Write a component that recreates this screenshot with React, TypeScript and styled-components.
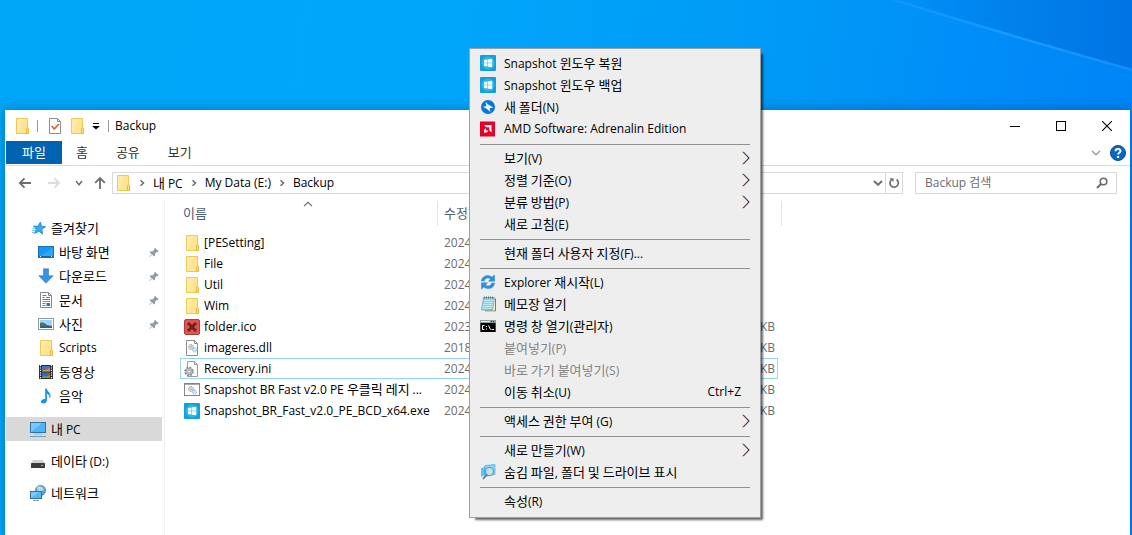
import React from "react";
import styled, { createGlobalStyle, css } from "styled-components";

const GlobalStyle = createGlobalStyle`
  *, *::before, *::after { box-sizing: border-box; }
  body { margin: 0; }
  body, button, input, table {
    font-family: "Open Sans", "Noto Sans CJK KR", sans-serif;
    font-size: 12px;
    line-height: 16px;
    color: #000;
  }
  button { border: 0; padding: 0; background: none; text-align: left; }
`;

/* ---------- text ---------- */

const Hangul = styled.span`
  font-family: "Noto Sans CJK KR", sans-serif;
  font-size: 13px;
`;

/* Hangul is set one size up so that it balances the Latin letters. */
function Label({ children }: { children: string }) {
  const runs = children.split(/([가-힣]+(?: [가-힣]+)* ?)/).filter(Boolean);
  return (
    <span>
      {runs.map((run, i) =>
        /[가-힣]/.test(run) ? <Hangul key={i}>{run}</Hangul> : <React.Fragment key={i}>{run}</React.Fragment>
      )}
    </span>
  );
}

/* ---------- icons ---------- */

const Icon = styled.svg`
  display: block;
  flex: none;
`;

const Svg = ({ w = 16, h = 16, children }: { w?: number; h?: number; children: React.ReactNode }) => (
  <Icon width={w} height={h} viewBox={`0 0 ${w} ${h}`} fill="none" aria-hidden="true">
    {children}
  </Icon>
);

const FolderIcon = () => (
  <Svg>
    <path d="M2.500.5h11v15h-11z" fill="#ffe592" stroke="#ecca58" />
    <path d="M3 1h6L4 15H3z" fill="#ffeba8" />
    <path d="M12.500 10.500c0-1 2-1 2 0v5h-2z" fill="#ffe17e" stroke="#e5b93c" />
  </Svg>
);

const WindowsAppIcon = () => (
  <Svg>
    <rect width="16" height="16" rx="1" fill="#12a0dc" />
    <circle cx="8" cy="8" r="6.500" fill="#2cb7ec" />
    <path d="M4 5l3.500-.6v3.300H4zM8.100 4.300L12.200 3.700v4H8.100zM4 8.300h3.500v3.300L4 11zM8.100 8.300h4.100v4l-4.100-.6z" fill="#fff" />
  </Svg>
);

const BoltIcon = () => (
  <Svg>
    <circle cx="8" cy="8" r="7" fill="#0a78d8" />
    <path d="M5.500 3l3.300 3 4.400 2.600-3.700.6.900 3.900-3.400-3L3 7.800l3.300-.6z" fill="#fff" />
  </Svg>
);

const AmdIcon = () => (
  <Svg>
    <rect width="15" height="15" y="0.500" fill="#e4002b" />
    <path d="M4 4h7.500v7.500L9.300 9.300V6.200H6.200zM6 7L4 9v2.500h2.600l2-2H6z" fill="#fff" />
  </Svg>
);

const RefreshIcon = () => (
  <Svg>
    <path d="M1 7.300C1.500 1.800 8-.8 12 2.800L14.800.5v7H8L10.200 5C7.800 3.600 5 4.600 4.400 7.300z" fill="#2f8fd8" />
    <path d="M15 8.700c-.5 5.500-7 8.100-11 4.500l-2.800 2.300v-7H8L5.800 11c2.400 1.400 5.200.4 5.800-2.300z" fill="#2f8fd8" />
  </Svg>
);

const NotepadIcon = () => (
  <Svg>
    <path d="M5 2.500h11v12.800H5z" fill="#8d7a48" />
    <path d="M4.500 2h10.500v12.500H5z" fill="#f3ecd0" />
    <path d="M3.500 1.500h11l-2 12.500h-11z" fill="#8fd2e0" stroke="#4b9cae" strokeWidth=".6" />
    <path d="M3.700 4.500h10M3.400 6.500h10M3 8.500h10M2.700 10.500h10M2.400 12.300h9.800" stroke="#c6edf4" strokeWidth=".8" />
    <path d="M4.500.5v2M6.500.5v2M8.500.5v2M10.500.5v2M12.500.5v2" stroke="#33616e" strokeWidth=".8" />
  </Svg>
);

const ConsoleIcon = () => (
  <Svg>
    <rect y="2" width="16" height="12" fill="#8f9a9f" />
    <path d="M1 3.500h9" stroke="#e6eef0" />
    <path d="M11 3.500h1M13 3.500h1" stroke="#333" />
    <rect x=".5" y="5" width="15" height="9" fill="#000" />
    <path d="M4.500 7.500H2.500v4h2M6.500 8v1M6.500 10.500v1M8.500 7.500l2 4M11.500 11.500H14" stroke="#fff" />
  </Svg>
);

const SearchFoldersIcon = () => (
  <Svg>
    <path d="M4 2.500l9-2v9l-9 2z" fill="#49b6f0" />
    <path d="M1 4l3-.5v8L1 13z" fill="#5bc3f8" />
    <path d="M5 1.500l10-1v10l-10 2z" fill="#86d3f8" stroke="#3fa9e0" strokeWidth=".6" />
    <circle cx="9.500" cy="7.500" r="4" fill="#b7e5fa" stroke="#82929c" strokeWidth="1.200" />
    <path d="M6.800 10.700L3 15" stroke="#6c7880" strokeWidth="1.800" />
  </Svg>
);

const RedXIcon = () => (
  <Svg>
    <rect x=".5" y=".5" width="15" height="15" rx="1.500" fill="#e4524f" stroke="#a8423f" />
    <path d="M4 4l8 8M12 4l-8 8" stroke="#6b2422" strokeWidth="3" />
  </Svg>
);

const GearPair = () => (
  <g stroke="#8b959b">
    <circle cx="7" cy="7" r="2.500" fill="#dfe4e7" strokeDasharray="1.200 .7" />
    <circle cx="7" cy="7" r="1" fill="#fff" strokeWidth=".6" />
    <circle cx="10.500" cy="10" r="2" fill="#d4e8f4" stroke="#7fa9c2" strokeDasharray="1 .6" />
  </g>
);

const DllIcon = () => (
  <Svg>
    <path d="M2.500.5h8l3 3v12h-11z" fill="#fff" stroke="#8d8d8d" />
    <path d="M10.500.5v3h3" stroke="#8d8d8d" />
    <GearPair />
  </Svg>
);

const IniIcon = () => (
  <Svg>
    <path d="M3.500.5h7l3 3v12h-10z" fill="#fafafa" stroke="#9b9b9b" />
    <path d="M10.500.5v3h3" stroke="#9b9b9b" />
    <circle cx="5" cy="10.500" r="4" fill="#c9cdd0" stroke="#878c90" strokeWidth="1.600" strokeDasharray="1.800 1.340" />
    <circle cx="5" cy="10.500" r="3" fill="#c4c9cc" stroke="#8c9195" strokeWidth=".6" />
    <circle cx="5" cy="10.500" r="1.300" fill="#fff" stroke="#8c9195" strokeWidth=".6" />
  </Svg>
);

const BatchIcon = () => (
  <Svg>
    <rect x=".5" y="1.500" width="15" height="12" fill="#fff" stroke="#858585" />
    <path d="M1 2.500h14" stroke="#a9a9a9" />
    <GearPair />
  </Svg>
);

const StarIcon = () => (
  <Svg>
    <path d="M10.500 2l.8 4.200 4.300.6-3.700 2.400.6 4.800-3.600-2.700-4.400 2.100 1.800-4.400L3.500 6l4.300.2z" fill="#35aaf0" stroke="#1a82c8" strokeWidth=".8" />
    <path d="M2.500 8.500h3M2 10.500h3M2 12.500h2" stroke="#5cbcf2" strokeWidth=".8" />
  </Svg>
);

const DesktopIcon = () => (
  <Svg>
    <rect x=".5" y="2.500" width="15" height="11" fill="#1a96f0" stroke="#1673b8" />
    <path d="M1 13h14V4z" fill="#2fa8fa" />
    <path d="M1 12.500h14" stroke="#0c66ad" />
    <path d="M2 12.500h1M13 12.500h1" stroke="#fff" />
  </Svg>
);

const DownloadIcon = () => (
  <Svg>
    <path d="M5.500.8h5v7h4.700L8 15.200.8 7.800h4.700z" fill="#3a92e0" stroke="#2a7ac4" strokeWidth=".6" />
  </Svg>
);

const DocumentIcon = () => (
  <Svg>
    <path d="M2.500.5h8l3 3v12h-11z" fill="#fff" stroke="#7f8b93" />
    <path d="M10.500.5v3h3" stroke="#7f8b93" />
    <path d="M4.500 5.500h2M4.500 3.500h4M8 5.500h4M4.500 7.500h7.500M4.500 11.500h3M4.500 13.500h3M9 11.500h3" stroke="#3b8ccb" />
    <rect x="4.500" y="9" width="7.500" height="1" fill="#59a3d8" />
    <rect x="8.500" y="11" width="3.500" height="3" fill="#2f79b5" />
  </Svg>
);

const PictureIcon = () => (
  <Svg>
    <rect x=".5" y="2.500" width="15" height="11" fill="#fff" stroke="#8f9ba3" />
    <rect x="2" y="4" width="12" height="8" fill="#9fd3f4" />
    <path d="M2 7c3-1 5 0 7 2l5 1v2H2z" fill="#48745f" />
    <path d="M2 10.500c4-1 8-.5 12 .5v1H2z" fill="#2b5f92" />
  </Svg>
);

const VideoIcon = () => (
  <Svg>
    <rect x="1" y="1" width="14" height="14" fill="#2a2a2a" />
    <path d="M2.500 1v14M13.500 1v14" stroke="#fff" strokeWidth="1.200" strokeDasharray="1.200 1.200" />
    <rect x="4" y="2" width="8" height="5.500" fill="#3c78cc" />
    <rect x="4" y="8.500" width="8" height="5.500" fill="#3568c0" />
    <path d="M4 7.500c2-3 4 0 8-4v4z" fill="#d8962a" />
    <path d="M5 3h2v2H5zM9 9.500h2v2H9z" fill="#c24a28" />
    <path d="M4 13c3-2 4 1 8-2v3H4z" fill="#77a43c" />
  </Svg>
);

const MusicIcon = () => (
  <Svg>
    <path d="M7.200.5h1.500c.3 3 4.500 4 3.800 8.500l-1 1.500c.3-3-.8-4-2.600-4.700V12.500c0 2-1.800 3-3.600 3-1.500 0-2.500-.8-2.300-2 .2-1.700 2.200-2.800 4.200-2.300z" fill="#1493ea" />
  </Svg>
);

const ComputerIcon = () => (
  <Svg>
    <rect x=".5" y="1.500" width="15" height="10" fill="#4db4f8" stroke="#31749c" />
    <path d="M1 11V2h11z" fill="#78cafc" />
    <path d="M4 13h8" stroke="#a3b5c2" />
    <path d="M0 15.500h16" stroke="#6f9dbd" />
  </Svg>
);

const DriveIcon = () => (
  <Svg>
    <path d="M3 7h10l2 4H1z" fill="#d2d2d2" />
    <rect x="1" y="10" width="14" height="5" rx=".5" fill="#3b3b3b" />
    <rect x="11" y="12" width="2" height="1" fill="#5df070" />
  </Svg>
);

const NetworkIcon = () => (
  <Svg>
    <circle cx="10.500" cy="5.500" r="5.200" fill="#5fa3c4" stroke="#3f7f9f" strokeWidth=".6" />
    <path d="M7 2c3-2 6 0 7 3-2 0-3 2-2 4-2 0-5-3-5-7z" fill="#b6dcec" />
    <rect x=".5" y="6.500" width="11" height="7" fill="#52b8f8" stroke="#31749c" />
    <path d="M1 13V7h8z" fill="#78cafc" />
    <path d="M3 15.500h6" stroke="#7fa3b8" />
  </Svg>
);

const PinIcon = () => (
  <Svg w={10} h={11}>
    <path d="M6 .8l3.500 3.500-1 .7-.8-.1-1.800 1.900.1 2-.9.800-2-2L.8 10l-.4-.4L2.700 7.200.7 5.200l.8-.9 2 .1 1.900-1.800-.1-.9z" fill="#8d9aa4" />
  </Svg>
);

const CheckDocIcon = () => (
  <Svg>
    <path d="M2.500.5h8l3 3v12h-11z" fill="#fff" stroke="#8f8f8f" />
    <path d="M10.500.5v3h3" stroke="#8f8f8f" />
    <path d="M4.700 8l2.600 3 4.600-5" stroke="#e8602c" strokeWidth="1.800" />
  </Svg>
);

const BackArrow = () => (
  <Svg w={14} h={12}>
    <path d="M13 6H2M6.500 1.300L1.800 6l4.700 4.700" stroke="#6e6e6e" strokeWidth="1.800" />
  </Svg>
);

const ForwardArrow = () => (
  <Svg w={14} h={12}>
    <path d="M1 6h11M7.500 1.300L12.200 6l-4.700 4.700" stroke="#dcdcdc" strokeWidth="1.800" />
  </Svg>
);

const UpArrow = () => (
  <Svg w={12} h={14}>
    <path d="M6 13V2M1.200 6.800L6 2l4.800 4.800" stroke="#6e6e6e" strokeWidth="1.800" />
  </Svg>
);

const Chevron = ({ w, color, weight }: { w: number; color: string; weight: number }) => (
  <Svg w={w} h={6}>
    <path d={`M1 1l${w / 2 - 1} 3.800L${w - 1} 1`} stroke={color} strokeWidth={weight} />
  </Svg>
);

const CrumbChevron = () => (
  <Svg w={6} h={8}>
    <path d="M1.500 1.200L4.500 4l-3 2.800" stroke="#6a6a6a" strokeWidth="1.500" />
  </Svg>
);

const SubmenuArrow = () => (
  <Svg w={8} h={14}>
    <path d="M.3.8L6.300 7l-6 6.200" stroke="#d08a70" strokeWidth=".8" />
    <path d="M1.600.8L7.600 7l-6 6.200" stroke="#5a90d8" strokeWidth=".8" />
    <path d="M1 .8L7 7l-6 6.200" stroke="#4a2030" strokeWidth=".9" />
  </Svg>
);

/* ---------- desktop and window frame ---------- */

const Desktop = styled.div`
  position: relative;
  display: flex;
  flex-direction: column;
  min-height: 100vh;
  padding: 110px 2px 0 5px;
  overflow: hidden;
  background: linear-gradient(97deg, #00a7f8 0%, #00a6fa 38%, #009af6 66%, #008cf9 84%, #0082f4 100%);
`;

const LightBeam = styled.svg`
  position: absolute;
  top: 0;
  right: 0;
`;

const Window = styled.main`
  position: relative;
  flex: 1;
  display: flex;
  flex-direction: column;
  padding-left: 1px;
  background: #fff;
  box-shadow: 0 0 12px rgba(0, 30, 80, 0.35);
`;

const TitleBar = styled.header`
  display: flex;
  align-items: center;
  height: 31px;
  padding-left: 8px;
`;

const QuickAccess = styled.div`
  display: flex;
  align-items: center;
  gap: 6px;
`;

const VRule = styled.span`
  width: 1px;
  height: 12px;
  margin: 0 3px 0 1px;
  background: #999;
`;

const WindowTitle = styled.h1`
  flex: 1;
  margin: 0 0 0 3px;
  font-size: 12px;
  font-weight: 400;
`;

const CaptionButton = styled.button`
  display: grid;
  place-items: center;
  width: 46px;
  height: 31px;
`;

const Ribbon = styled.nav`
  display: flex;
  padding-bottom: 1px;
  border-bottom: 1px solid #dadbdc;
`;

const RibbonTab = styled.button<{ $file?: boolean }>`
  height: 23px;
  padding: 0 14px;
  color: #333;
  ${(p) =>
    p.$file &&
    css`
      padding: 0 16px;
      background: #0063b1;
      color: #fff;
    `}
`;

const RibbonEnd = styled.div`
  flex: 1;
  display: flex;
  justify-content: flex-end;
  align-items: center;
  gap: 9px;
  padding-right: 4px;
`;

const IconButton = styled.button`
  display: grid;
  place-items: center;
  min-width: 10px;
  height: 20px;
`;

const AddressRow = styled.div`
  display: flex;
  align-items: center;
  padding: 6px 13px 7px 12px;
`;

const History = styled.div`
  display: flex;
  align-items: center;
  gap: 12px;
  width: 94px;
`;

const HistoryEnd = styled.div`
  display: flex;
  align-items: center;
  gap: 10px;
`;

const ForwardButton = styled(IconButton)`
  width: 20px;
`;

const AddressBox = styled.div`
  flex: 1;
  display: flex;
  align-items: center;
  height: 22px;
  padding-left: 2px;
  border: 1px solid #d9d9d9;
`;

const Crumbs = styled.ol`
  flex: 1;
  display: flex;
  align-items: center;
  margin: 0;
  padding: 0;
  list-style: none;
`;

const Crumb = styled.li`
  display: flex;
  align-items: center;
  svg { margin: 0 8px; }
`;

const RefreshButton = styled.button`
  display: grid;
  place-items: center;
  width: 17px;
  height: 20px;
  margin-left: 2px;
  border-left: 1px solid #d9d9d9;
`;

const SearchBox = styled.label`
  display: flex;
  align-items: center;
  width: 202px;
  height: 22px;
  margin-left: 12px;
  padding: 0 8px 0 9px;
  border: 1px solid #d9d9d9;
`;

const SearchInput = styled.input`
  flex: 1;
  min-width: 0;
  border: 0;
  padding: 0;
  outline: 0;
  background: none;
  &::placeholder { color: #6d6d6d; opacity: 1; }
`;

/* ---------- navigation pane ---------- */

const Body = styled.div`
  flex: 1;
  display: flex;
`;

const NavPane = styled.nav`
  flex: none;
  width: 159px;
  padding: 15px 2px 0 0;
  border-right: 1px solid #f0f0f0;
`;

const NavGroup = styled.ul`
  display: flex;
  flex-direction: column;
  margin: 0;
  padding: 0;
  list-style: none;
  & + & {
    gap: 8px;
    margin-top: 9px;
  }
`;

const NavLink = styled.a<{ $child?: boolean; $selected?: boolean }>`
  display: flex;
  align-items: center;
  gap: 5px;
  height: 24px;
  padding: 0 3px 0 ${(p) => (p.$child ? 32 : 24)}px;
  background: ${(p) => (p.$selected ? "#d9d9d9" : "transparent")};
  color: #000;
  text-decoration: none;
  > span { flex: 1; }
`;

/* ---------- file list ---------- */

const FilePane = styled.section`
  flex: 1;
  padding-left: 15px;
`;

const FileTable = styled.table`
  width: 602px;
  table-layout: fixed;
  border-spacing: 0;
`;

const HeadCell = styled.th<{ $first?: boolean }>`
  position: relative;
  padding: 0 0 6px;
  font-weight: 400;
  text-align: left;
  color: #4c607a;
  > div {
    height: 25px;
    padding: 4px 0 0 ${(p) => (p.$first ? 3 : 6)}px;
    border-right: 1px solid #e5e5e5;
  }
`;

const SortMark = styled.span`
  position: absolute;
  top: 0;
  left: 50%;
  margin-left: -6px;
`;

const FileRow = styled.tr<{ $focused?: boolean }>`
  td {
    height: 21px;
    padding: 0 0 0 6px;
    border: 0 solid ${(p) => (p.$focused ? "#99d1ff" : "transparent")};
    border-width: 1px 0;
    color: #6d6d6d;
  }
  td:first-child {
    padding: 0 0 0 3px;
    border-left-width: 1px;
    color: #000;
  }
  td:nth-child(4) {
    padding: 0 2px 0 0;
    border-right-width: 1px;
    text-align: right;
  }
  td:last-child { border: 0; padding: 0; }
`;

const FileName = styled.div`
  display: flex;
  align-items: center;
  gap: 4px;
  height: 19px;
  white-space: nowrap;
`;

/* ---------- context menu ---------- */

const ContextMenu = styled.div`
  position: absolute;
  top: 48px;
  left: 469px;
  width: 292px;
  padding: 3px 0 5px;
  border: 1px solid #a0a0a0;
  background: #eee;
  box-shadow: 4px 4px 2px -2px rgba(0, 0, 0, 0.6);
`;

const MenuItem = styled.button`
  display: grid;
  grid-template-columns: 16px 1fr auto;
  align-items: center;
  column-gap: 8px;
  width: 100%;
  height: 22px;
  padding: 0 10px;
  white-space: nowrap;
  &:disabled { color: #838383; }
`;

const IconSlot = styled.span`
  width: 16px;
`;

const Shortcut = styled.kbd`
  margin-right: 9px;
  font-family: inherit;
`;

const MenuRule = styled.hr`
  height: 1px;
  margin: 4px 10px 2px;
  border: 0;
  background: #919191;
`;

/* ---------- data ---------- */

type NavEntry = { name: string; icon: React.ReactNode; child?: boolean; pinned?: boolean; selected?: boolean };

const navGroups: NavEntry[][] = [
  [
    { name: "즐겨찾기", icon: <StarIcon /> },
    { name: "바탕 화면", icon: <DesktopIcon />, child: true, pinned: true },
    { name: "다운로드", icon: <DownloadIcon />, child: true, pinned: true },
    { name: "문서", icon: <DocumentIcon />, child: true, pinned: true },
    { name: "사진", icon: <PictureIcon />, child: true, pinned: true },
    { name: "Scripts", icon: <FolderIcon />, child: true },
    { name: "동영상", icon: <VideoIcon />, child: true },
    { name: "음악", icon: <MusicIcon />, child: true },
  ],
  [
    { name: "내 PC", icon: <ComputerIcon />, selected: true },
    { name: "데이타 (D:)", icon: <DriveIcon /> },
    { name: "네트워크", icon: <NetworkIcon /> },
  ],
];

const files = [
  { name: "[PESetting]", icon: <FolderIcon />, year: "2024" },
  { name: "File", icon: <FolderIcon />, year: "2024" },
  { name: "Util", icon: <FolderIcon />, year: "2024" },
  { name: "Wim", icon: <FolderIcon />, year: "2024" },
  { name: "folder.ico", icon: <RedXIcon />, year: "2023", size: "KB" },
  { name: "imageres.dll", icon: <DllIcon />, year: "2018", size: "KB" },
  { name: "Recovery.ini", icon: <IniIcon />, year: "2024", size: "KB", focused: true },
  { name: "Snapshot BR Fast v2.0 PE 우클릭 레지 ...", icon: <BatchIcon />, year: "2024", size: "KB" },
  { name: "Snapshot_BR_Fast_v2.0_PE_BCD_x64.exe", icon: <WindowsAppIcon />, year: "2024", size: "KB" },
];

type Entry = { name: string; icon?: React.ReactNode; submenu?: boolean; disabled?: boolean; shortcut?: string };

const menuGroups: Entry[][] = [
  [
    { name: "Snapshot 윈도우 복원", icon: <WindowsAppIcon /> },
    { name: "Snapshot 윈도우 백업", icon: <WindowsAppIcon /> },
    { name: "새 폴더(N)", icon: <BoltIcon /> },
    { name: "AMD Software: Adrenalin Edition", icon: <AmdIcon /> },
  ],
  [
    { name: "보기(V)", submenu: true },
    { name: "정렬 기준(O)", submenu: true },
    { name: "분류 방법(P)", submenu: true },
    { name: "새로 고침(E)" },
  ],
  [{ name: "현재 폴더 사용자 지정(F)..." }],
  [
    { name: "Explorer 재시작(L)", icon: <RefreshIcon /> },
    { name: "메모장 열기", icon: <NotepadIcon /> },
    { name: "명령 창 열기(관리자)", icon: <ConsoleIcon /> },
    { name: "붙여넣기(P)", disabled: true },
    { name: "바로 가기 붙여넣기(S)", disabled: true },
    { name: "이동 취소(U)", shortcut: "Ctrl+Z" },
  ],
  [{ name: "액세스 권한 부여 (G)", submenu: true }],
  [
    { name: "새로 만들기(W)", submenu: true },
    { name: "숨김 파일, 폴더 및 드라이브 표시", icon: <SearchFoldersIcon /> },
  ],
  [{ name: "속성(R)" }],
];

export default function App() {
  return (
    <Desktop>
      <GlobalStyle />
      <LightBeam width="252" height="120" viewBox="0 0 252 120" aria-hidden="true">
        <defs>
          <linearGradient id="corner" x1="0" y1="0" x2="1" y2="0">
            <stop offset="0" stopColor="#0088f2" stopOpacity="0" />
            <stop offset=".4" stopColor="#0084ee" />
            <stop offset="1" stopColor="#0074e4" />
          </linearGradient>
          <linearGradient id="beam" x1="0" y1="0" x2="1" y2="0">
            <stop offset="0" stopColor="#1a9cff" stopOpacity=".5" />
            <stop offset=".5" stopColor="#1a9cff" />
            <stop offset="1" stopColor="#1a96ff" stopOpacity=".7" />
          </linearGradient>
        </defs>
        <path d="M12 0H252V70Z" fill="url(#corner)" />
        <path d="M8 -2Q130 36 253 70" fill="none" stroke="url(#beam)" strokeWidth="2.500" />
      </LightBeam>

      <Window>
        <TitleBar>
          <QuickAccess>
            <FolderIcon />
            <VRule />
            <IconButton aria-label="속성"><CheckDocIcon /></IconButton>
            <IconButton aria-label="새 폴더"><FolderIcon /></IconButton>
            <IconButton aria-label="도구 모음 사용자 지정">
              <Svg w={8} h={8}>
                <path d="M1 1.500h6" stroke="#000" />
                <path d="M0 4h8L4 7.500z" fill="#000" />
              </Svg>
            </IconButton>
            <VRule />
          </QuickAccess>
          <WindowTitle>Backup</WindowTitle>
          <CaptionButton aria-label="최소화">
            <Svg w={10} h={10}><path d="M0 5.500h10" stroke="#000" /></Svg>
          </CaptionButton>
          <CaptionButton aria-label="최대화">
            <Svg w={10} h={10}><rect x=".5" y=".5" width="9" height="9" stroke="#000" /></Svg>
          </CaptionButton>
          <CaptionButton aria-label="닫기">
            <Svg w={10} h={10}><path d="M0 0l10 10M10 0L0 10" stroke="#000" strokeWidth="1.100" /></Svg>
          </CaptionButton>
        </TitleBar>

        <Ribbon>
          <RibbonTab $file><Label>파일</Label></RibbonTab>
          <RibbonTab><Label>홈</Label></RibbonTab>
          <RibbonTab><Label>공유</Label></RibbonTab>
          <RibbonTab><Label>보기</Label></RibbonTab>
          <RibbonEnd>
            <IconButton aria-label="리본 확장"><Chevron w={10} color="#999" weight={1.3} /></IconButton>
            <IconButton aria-label="도움말">
              <Svg>
                <circle cx="8" cy="8" r="7.500" fill="#0a66c0" stroke="#084f96" />
                <path d="M5.600 6.200c0-3 4.900-3 4.900-.2 0 1.700-2.400 1.700-2.400 3.400" stroke="#fff" strokeWidth="1.900" />
                <circle cx="8.100" cy="11.900" r="1.200" fill="#fff" />
              </Svg>
            </IconButton>
          </RibbonEnd>
        </Ribbon>

        <AddressRow>
          <History>
            <IconButton aria-label="뒤로"><BackArrow /></IconButton>
            <HistoryEnd>
              <ForwardButton aria-label="앞으로"><ForwardArrow /></ForwardButton>
              <IconButton aria-label="최근 위치"><Chevron w={8} color="#6e6e6e" weight={1.5} /></IconButton>
              <IconButton aria-label="위로"><UpArrow /></IconButton>
            </HistoryEnd>
          </History>
          <AddressBox>
            <FolderIcon />
            <Crumbs>
              {["내 PC", "My Data (E:)", "Backup"].map((name) => (
                <Crumb key={name}>
                  <CrumbChevron />
                  <button><Label>{name}</Label></button>
                </Crumb>
              ))}
            </Crumbs>
            <IconButton aria-label="이전 위치"><Chevron w={10} color="#6e6e6e" weight={2} /></IconButton>
            <RefreshButton aria-label="새로 고침">
              <Svg w={12} h={12}>
                <path d="M8.500 2.500A4.200 4.200 0 1 1 3.300 2.900" stroke="#6e6e6e" strokeWidth="1.700" />
                <path d="M1.500 1.200h4v4z" fill="#6e6e6e" />
              </Svg>
            </RefreshButton>
          </AddressBox>
          <SearchBox>
            <SearchInput type="search" aria-label="검색" placeholder="Backup 검색" />
            <Svg w={12} h={12}>
              <circle cx="7.500" cy="4.500" r="3.300" stroke="#6a6a6a" strokeWidth="1.600" />
              <path d="M5 7L1 11" stroke="#6a6a6a" strokeWidth="2" />
            </Svg>
          </SearchBox>
        </AddressRow>

        <Body>
          <NavPane>
            {navGroups.map((group, i) => (
              <NavGroup key={i}>
                {group.map((entry) => (
                  <li key={entry.name}>
                    <NavLink href="#" $child={entry.child} $selected={entry.selected}>
                      {entry.icon}
                      <Label>{entry.name}</Label>
                      {entry.pinned && <PinIcon />}
                    </NavLink>
                  </li>
                ))}
              </NavGroup>
            ))}
          </NavPane>

          <FilePane>
            <FileTable>
              <colgroup>
                <col width="258" />
                <col width="110" />
                <col width="110" />
                <col width="120" />
                <col width="4" />
              </colgroup>
              <thead>
                <tr>
                  <HeadCell $first>
                    <div><Label>이름</Label></div>
                    <SortMark>
                      <Svg w={10} h={6}><path d="M1 5.200l4-3.900 4 3.900" stroke="#666" strokeWidth="1.100" /></Svg>
                    </SortMark>
                  </HeadCell>
                  <HeadCell><div><Label>수정한</Label></div></HeadCell>
                  <HeadCell><div /></HeadCell>
                  <HeadCell colSpan={2}><div /></HeadCell>
                </tr>
              </thead>
              <tbody>
                {files.map((file) => (
                  <FileRow key={file.name} $focused={file.focused}>
                    <td><FileName>{file.icon}<Label>{file.name}</Label></FileName></td>
                    <td>{file.year}</td>
                    <td />
                    <td>{file.size}</td>
                    <td />
                  </FileRow>
                ))}
              </tbody>
            </FileTable>
          </FilePane>
        </Body>
      </Window>

      <ContextMenu role="menu">
        {menuGroups.map((group, i) => (
          <React.Fragment key={i}>
            {i > 0 && <MenuRule />}
            {group.map((entry) => (
              <MenuItem key={entry.name} role="menuitem" disabled={entry.disabled}>
                <IconSlot>{entry.icon}</IconSlot>
                <Label>{entry.name}</Label>
                {entry.submenu && <SubmenuArrow />}
                {entry.shortcut && <Shortcut>{entry.shortcut}</Shortcut>}
              </MenuItem>
            ))}
          </React.Fragment>
        ))}
      </ContextMenu>
    </Desktop>
  );
}
